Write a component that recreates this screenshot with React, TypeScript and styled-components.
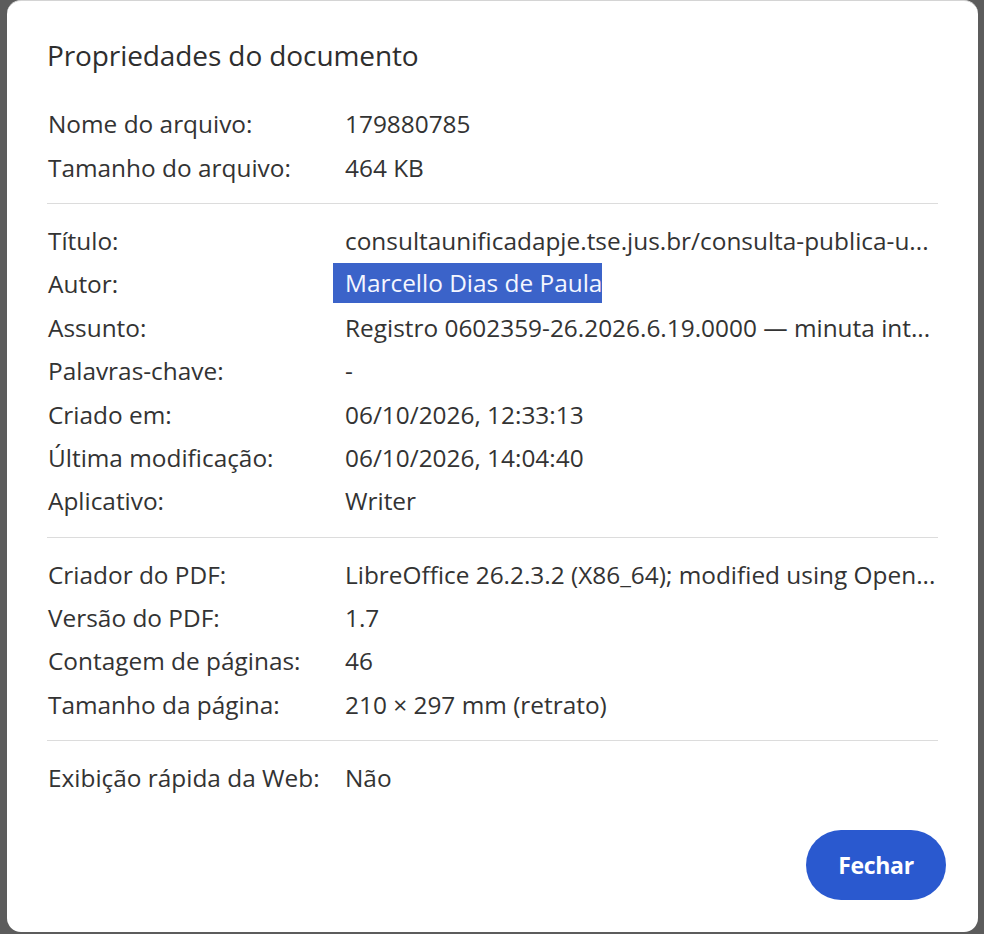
import React from "react";
import styled, { createGlobalStyle } from "styled-components";

const Global = createGlobalStyle`
  html, body {
    margin: 0;
    padding: 0;
    background: #5c5c5c;
  }
  body {
    font-family: "Open Sans", "Noto Sans", "Liberation Sans", sans-serif;
    -webkit-font-smoothing: antialiased;
  }
  * { box-sizing: border-box; }
`;

const Backdrop = styled.div`
  width: 984px;
  height: 934px;
  padding: 0 6px 2px 7px;
  background: #5c5c5c;
  overflow: hidden;
`;

const Dialog = styled.section`
  height: 100%;
  background: #ffffff;
  border-radius: 14px;
  border-top: 1px solid #d4d4d4;
  padding: 0 40px;
  display: flex;
  flex-direction: column;
  color: #333333;
`;

const Title = styled.h2`
  margin: 37px 0 30px;
  font-size: 28px;
  line-height: 34px;
  font-weight: 400;
  color: #2e2e2e;
  letter-spacing: -0.1px;
`;

const Section = styled.div<{ $first?: boolean }>`
  display: grid;
  grid-template-columns: 297px 1fr;
  grid-auto-rows: 43.4px;
  align-items: center;
  padding: ${(p) => (p.$first ? "0" : "15px")} 0 14px;
  border-top: ${(p) => (p.$first ? "none" : "1px solid #dcdcdc")};
`;

const Label = styled.div`
  font-size: 24.4px;
  padding-left: 1px;
  white-space: nowrap;
`;

const Value = styled.div`
  font-size: 24.4px;
  padding-left: 1px;
  white-space: nowrap;
  min-width: 0;
`;

const Selected = styled.span`
  display: inline-block;
  background: #3b63c9;
  color: #f4f6ff;
  margin-left: -12px;
  margin-top: -2px;
  padding: 4px 0 5px 12px;
  line-height: 31px;
`;

const Footer = styled.div`
  margin-top: auto;
  margin-right: -8px;
  padding-bottom: 32px;
  display: flex;
  justify-content: flex-end;
`;

const CloseButton = styled.button`
  width: 140px;
  height: 70px;
  border: none;
  border-radius: 35px;
  background: #2a59cf;
  color: #ffffff;
  font-family: "Open Sans", "Noto Sans", sans-serif;
  font-size: 23px;
  font-weight: 700;
  letter-spacing: -0.3px;
  cursor: pointer;
`;

type Row = { label: string; value: React.ReactNode };

const fileRows: Row[] = [
  { label: "Nome do arquivo:", value: "179880785" },
  { label: "Tamanho do arquivo:", value: "464 KB" },
];

const docRows: Row[] = [
  { label: "Título:", value: "consultaunificadapje.tse.jus.br/consulta-publica-u..." },
  { label: "Autor:", value: <Selected>Marcello Dias de Paula</Selected> },
  { label: "Assunto:", value: "Registro 0602359-26.2026.6.19.0000 — minuta int..." },
  { label: "Palavras-chave:", value: "-" },
  { label: "Criado em:", value: "06/10/2026, 12:33:13" },
  { label: "Última modificação:", value: "06/10/2026, 14:04:40" },
  { label: "Aplicativo:", value: "Writer" },
];

const pdfRows: Row[] = [
  { label: "Criador do PDF:", value: "LibreOffice 26.2.3.2 (X86_64); modified using Open..." },
  { label: "Versão do PDF:", value: "1.7" },
  { label: "Contagem de páginas:", value: "46" },
  { label: "Tamanho da página:", value: "210 × 297 mm (retrato)" },
];

const webRows: Row[] = [{ label: "Exibição rápida da Web:", value: "Não" }];

const Rows = ({ rows }: { rows: Row[] }) => (
  <>
    {rows.map((r) => (
      <React.Fragment key={r.label}>
        <Label>{r.label}</Label>
        <Value>{r.value}</Value>
      </React.Fragment>
    ))}
  </>
);

export default function App() {
  return (
    <>
      <Global />
      <Backdrop>
        <Dialog role="dialog" aria-label="Propriedades do documento">
          <Title>Propriedades do documento</Title>
          <Section $first>
            <Rows rows={fileRows} />
          </Section>
          <Section>
            <Rows rows={docRows} />
          </Section>
          <Section>
            <Rows rows={pdfRows} />
          </Section>
          <Section>
            <Rows rows={webRows} />
          </Section>
          <Footer>
            <CloseButton>Fechar</CloseButton>
          </Footer>
        </Dialog>
      </Backdrop>
    </>
  );
}
